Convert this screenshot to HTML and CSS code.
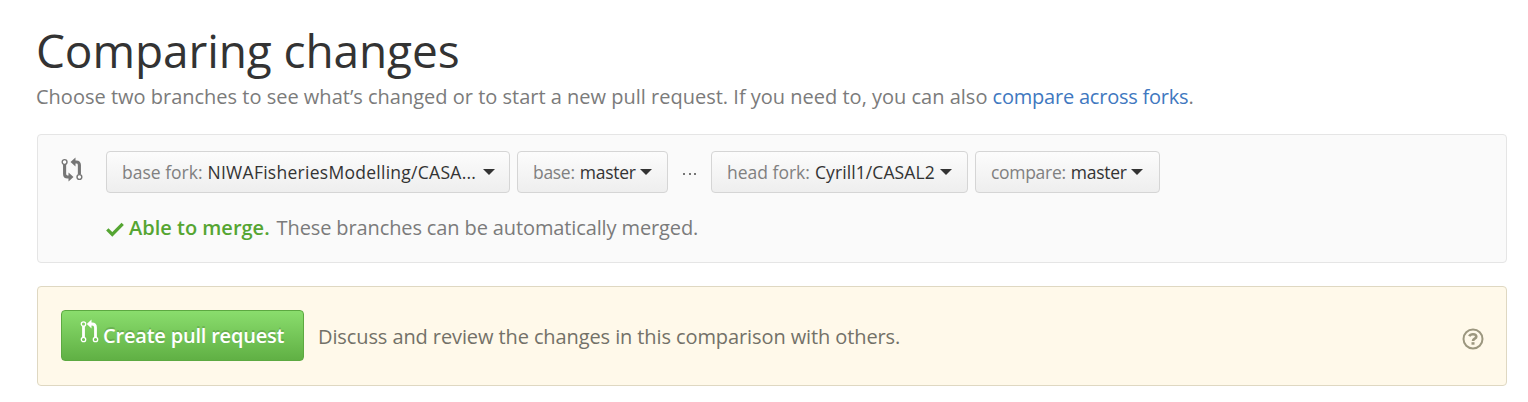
FILE: index.html
```html
<!DOCTYPE html>
<html lang="en">
<head>
<meta charset="utf-8">
<title>Comparing changes</title>
<link rel="stylesheet" href="styles.css">
</head>
<body>
<main class="page">
  <h1 class="title">Comparing changes</h1>
  <p class="lead">Choose two branches to see what’s changed or to start a new pull request. If you need to, you can also <a class="link" href="#">compare across forks</a>.</p>

  <section class="range">
    <svg class="range-icon" width="22" height="25" viewBox="0 0 22 25" fill="none" stroke="#767676">
      <circle cx="3.600" cy="4" r="2.400" fill="#fff" stroke-width="1.400"/>
      <circle cx="18.400" cy="19" r="2.400" fill="#fff" stroke-width="1.400"/>
      <path d="M3.600 6.500V16Q3.600 19 6.600 19H8M18.400 16.500V7Q18.400 4 15.400 4H14" stroke-width="3.100"/>
      <path d="M7.500 14.500V23.500L12.500 19ZM14.500 -.5V8.500L9.500 4Z" fill="#767676" stroke="none"/>
    </svg>
    <div class="range-body">
      <div class="selects">
        <button class="select select-base-fork"><span class="label">base fork:</span><span class="value">NIWAFisheriesModelling/CASA...</span><i class="caret"></i></button>
        <button class="select select-base"><span class="label">base:</span><span class="value">master</span><i class="caret"></i></button>
        <span class="dots"><i></i><i></i><i></i></span>
        <button class="select select-head-fork"><span class="label">head fork:</span><span class="value">Cyrill1/CASAL2</span><i class="caret"></i></button>
        <button class="select select-compare"><span class="label">compare:</span><span class="value">master</span><i class="caret"></i></button>
      </div>
      <div class="status">
        <svg class="check" width="18" height="15" viewBox="0 0 18 15"><path d="M1.300 7.300L6.300 12.300L16.700 1.900" fill="none" stroke="#55a532" stroke-width="3.300"/></svg>
        <strong class="mergeable">Able to merge.</strong>
        <span class="status-text">These branches can be automatically merged.</span>
      </div>
    </div>
  </section>

  <section class="create">
    <button class="primary">
      <svg class="pr-icon" width="19" height="24" viewBox="0 0 19 24" fill="none" stroke="#fff">
        <circle cx="3.500" cy="4" r="2.200" stroke-width="1.300"/>
        <circle cx="3.500" cy="19.500" r="2.200" stroke-width="1.300"/>
        <circle cx="15.500" cy="19.500" r="2.200" stroke-width="1.300"/>
        <path d="M3.500 6V17.500M15.500 17.500V7.500Q15.500 4 12 4H11" stroke-width="2.800"/>
        <path d="M11.500 -.5V8.500L6.800 4Z" fill="#fff" stroke="none"/>
      </svg>
      <span>Create pull request</span>
    </button>
    <span class="create-text">Discuss and review the changes in this comparison with others.</span>
    <svg class="help" width="22" height="22" viewBox="0 0 22 22" fill="none" stroke="#9c977f">
      <circle cx="11" cy="11" r="9.500" stroke-width="2"/>
      <path d="M7.300 8.200C8 6.700 9.300 6.200 11 6.200C13 6.200 14.300 7.100 14.300 8.700C14.300 10.800 11 10.600 11 13" stroke-width="2.600"/>
      <path d="M9.500 14.200H12.500V16.700H9.500Z" fill="#9c977f" stroke="none"/>
    </svg>
  </section>
</main>
</body>
</html>
```
FILE: styles.css
```css
* { box-sizing: border-box; }
body { margin: 0; background: #fff; color: #7b7b7b; font-family: "Open Sans", "Noto Sans", sans-serif; }
button { margin: 0; font-family: inherit; }
.page { padding: 19px 21px 0 37px; }
.title { margin: 0 0 1px -1px; height: 62px; font-size: 46px; line-height: 62px; font-weight: 400; letter-spacing: -.1px; color: #333; white-space: nowrap; }
.lead { margin: 0 0 22px -1px; height: 30px; font-size: 20px; line-height: 30px; white-space: nowrap; }
.link { color: #4078c0; text-decoration: none; letter-spacing: -.22px; }
.range { display: flex; height: 129px; padding: 16px 23px; border: 1px solid #e5e5e5; border-radius: 4px; background: #fafafa; }
.range-icon { margin: 7px 23px 0 0; flex: none; overflow: visible; }
.selects { display: flex; align-items: center; height: 42px; }
.select { display: flex; align-items: center; height: 42px; padding: 0 0 0 15px; border: 1px solid #d5d5d5; border-radius: 4px; background: linear-gradient(#fcfcfc, #eee); font-size: 17.500px; line-height: 24px; white-space: nowrap; }
.label { margin-right: 5px; color: #808080; }
.value { font-weight: 500; color: #333; }
.caret { flex: none; margin-left: 5px; border: 6.500px solid transparent; border-top-color: #333; border-bottom-width: 0; }
.select-base-fork { width: 404px; margin-right: 7px; }
.select-base-fork .value { letter-spacing: .27px; }
.select-base-fork .caret { margin-left: 7px; }
.select-base { width: 151px; }
.select-base .label, .select-compare .label { letter-spacing: -.3px; }
.select-base .value, .select-compare .value { letter-spacing: -.25px; }
.select-base .caret, .select-compare .caret { margin-left: 4px; }
.select-head-fork { width: 257px; margin-right: 7px; }
.select-head-fork .value { letter-spacing: .1px; }
.select-compare { width: 185px; }
.dots { display: flex; gap: 3px; width: 43px; padding: 3px 0 0 15px; }
.dots i { width: 2px; height: 2px; margin-right: .5px; background: #767676; }
.status { display: flex; align-items: center; height: 30px; margin-top: 20px; font-size: 20px; line-height: 30px; white-space: nowrap; }
.check { margin: 2px 5px 0 0; }
.mergeable { margin-right: 7px; font-weight: 600; color: #55a532; }
.status-text { letter-spacing: -.12px; }
.create { display: flex; align-items: center; height: 100px; margin-top: 23px; padding: 0 22px 0 23px; border: 1px solid #dfd8c2; border-radius: 4px; background: #fff9ea; }
.primary { display: flex; align-items: center; width: 243px; height: 51px; margin-top: -2px; padding: 0 0 0 17px; border: 1px solid #5ca941; border-radius: 4px; background: linear-gradient(#8add6d, #60b044); color: #fff; font-size: 20px; line-height: 28px; font-weight: 600; letter-spacing: -.2px; text-shadow: 0 -2px 0 rgba(0, 0, 0, .15); white-space: nowrap; }
.primary span { margin-top: 2px; }
.pr-icon { margin: -6px 4px 0 1px; flex: none; overflow: visible; }
.create-text { margin-left: 14px; font-size: 20px; letter-spacing: -.1px; color: #737168; white-space: nowrap; }
.help { margin: 6px 0 0 auto; }
```
